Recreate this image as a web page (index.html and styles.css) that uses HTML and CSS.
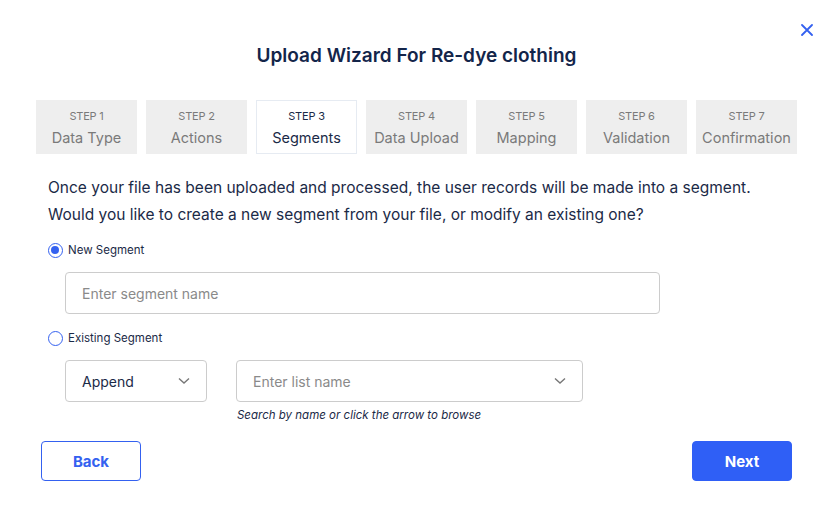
FILE: index.html
```html
<!DOCTYPE html>
<html lang="en">
<head>
    <meta charset="UTF-8">
    <meta name="viewport" content="width=device-width, initial-scale=1.0">
    <title>Upload Wizard</title>
    <link rel="stylesheet" href="styles.css">
</head>
<body>
    <div class="modal">
        <button class="close-btn" aria-label="Close">
            <svg viewBox="0 0 12 12" width="12" height="12">
                <path d="M1 1L11 11M11 1L1 11" stroke="currentColor" stroke-width="1.8" stroke-linecap="round"></path>
            </svg>
        </button>

        <h1 class="title">Upload Wizard For Re-dye clothing</h1>

        <div class="steps">
            <div class="step"><span class="step-num">STEP 1</span><span class="step-name">Data Type</span></div>
            <div class="step"><span class="step-num">STEP 2</span><span class="step-name">Actions</span></div>
            <div class="step active"><span class="step-num">STEP 3</span><span class="step-name">Segments</span></div>
            <div class="step"><span class="step-num">STEP 4</span><span class="step-name">Data Upload</span></div>
            <div class="step"><span class="step-num">STEP 5</span><span class="step-name">Mapping</span></div>
            <div class="step"><span class="step-num">STEP 6</span><span class="step-name">Validation</span></div>
            <div class="step"><span class="step-num">STEP 7</span><span class="step-name">Confirmation</span></div>
        </div>

        <p class="intro">
            Once your file has been uploaded and processed, the user records will be made into a segment.<br>
            Would you like to create a new segment from your file, or modify an existing one?
        </p>

        <label class="radio">
            <span class="radio-dot checked"></span>
            <span>New Segment</span>
        </label>
        <div class="field-row">
            <input type="text" class="text-input wide" placeholder="Enter segment name">
        </div>

        <label class="radio">
            <span class="radio-dot"></span>
            <span>Existing Segment</span>
        </label>
        <div class="field-row">
            <div class="select small">
                <span class="select-value">Append</span>
                <svg class="chevron" viewBox="0 0 12 8" width="12" height="8">
                    <path d="M1 1.5L6 6L11 1.5" fill="none" stroke="currentColor" stroke-width="1.4"></path>
                </svg>
            </div>
            <div class="list-group">
                <div class="select large">
                    <span class="select-placeholder">Enter list name</span>
                    <svg class="chevron" viewBox="0 0 12 8" width="12" height="8">
                        <path d="M1 1.5L6 6L11 1.5" fill="none" stroke="currentColor" stroke-width="1.4"></path>
                    </svg>
                </div>
                <div class="hint">Search by name or click the arrow to browse</div>
            </div>
        </div>

        <div class="actions">
            <button class="btn btn-outline">Back</button>
            <button class="btn btn-primary">Next</button>
        </div>
    </div>
</body>
</html>
```

FILE: styles.css
```css
* {
    margin: 0;
    padding: 0;
    box-sizing: border-box;
}

body {
    font-family: Inter, "Noto Sans", sans-serif;
    background: white;
    color: #1b2a47;
}

.modal {
    position: relative;
    width: 835px;
    height: 520px;
    padding: 44px 38px 0 36px;
}

.close-btn {
    position: absolute;
    top: 24px;
    right: 22px;
    background: none;
    border: none;
    color: #3461f0;
    width: 12px;
    height: 12px;
    cursor: pointer;
}

.close-btn svg {
    display: block;
}

.title {
    text-align: center;
    font-size: 19px;
    font-weight: 600;
    color: #13254a;
    line-height: 24px;
    margin-bottom: 32px;
}

.steps {
    display: flex;
    gap: 9px;
    margin-bottom: 20px;
}

.step {
    width: 101px;
    height: 54px;
    background: #eeeeee;
    border: 1px solid #eeeeee;
    display: flex;
    flex-direction: column;
    align-items: center;
    justify-content: center;
    color: #7a7a7a;
}

.step.active {
    background: white;
    border-color: #e6ebf2;
    color: #1b2a47;
}

.step-num {
    font-size: 11px;
    line-height: 16px;
    letter-spacing: -0.2px;
    margin-top: 2px;
}

.step-name {
    font-size: 14.5px;
    line-height: 22px;
    margin-top: 3px;
}

.intro {
    font-size: 15.5px;
    line-height: 27px;
    color: #1b2a47;
    padding-left: 12px;
    margin-bottom: 12px;
}

.radio {
    display: flex;
    align-items: center;
    gap: 5px;
    font-size: 11.5px;
    color: #1b2a47;
    padding-left: 12px;
    height: 20px;
}

.radio-dot {
    width: 15px;
    height: 15px;
    border: 1.5px solid #3461f0;
    border-radius: 50%;
    position: relative;
}

.radio-dot.checked::after {
    content: "";
    position: absolute;
    top: 2px;
    left: 2px;
    width: 8px;
    height: 8px;
    border-radius: 50%;
    background: #3461f0;
}

.field-row {
    display: flex;
    gap: 29px;
    padding-left: 29px;
    margin-top: 12px;
    margin-bottom: 14px;
}

.text-input {
    height: 42px;
    border: 1px solid #cccccc;
    border-radius: 4px;
    padding: 0 16px;
    font-family: inherit;
    font-size: 14px;
    color: #1b2a47;
}

.text-input::placeholder {
    color: #8a8a8a;
}

.text-input.wide {
    width: 595px;
}

.select {
    height: 42px;
    border: 1px solid #cccccc;
    border-radius: 4px;
    padding: 0 16px;
    display: flex;
    align-items: center;
    justify-content: space-between;
    font-size: 14px;
}

.select.small {
    width: 142px;
}

.select.large {
    width: 347px;
}

.select-value {
    color: #1b2a47;
}

.select-placeholder {
    color: #8a8a8a;
}

.chevron {
    color: #777777;
}

.hint {
    font-size: 11.5px;
    font-style: italic;
    color: #1b2a47;
    margin-top: 6px;
    padding-left: 1px;
}

.actions {
    display: flex;
    justify-content: space-between;
    padding-left: 5px;
    padding-right: 5px;
    margin-top: 19px;
}

.btn {
    width: 100px;
    height: 40px;
    border-radius: 4px;
    font-family: inherit;
    font-size: 15px;
    font-weight: 700;
    cursor: pointer;
}

.btn-outline {
    background: white;
    border: 1px solid #3461f0;
    color: #3461f0;
}

.btn-primary {
    background: #2f5ff6;
    border: 1px solid #2f5ff6;
    color: white;
}
```
